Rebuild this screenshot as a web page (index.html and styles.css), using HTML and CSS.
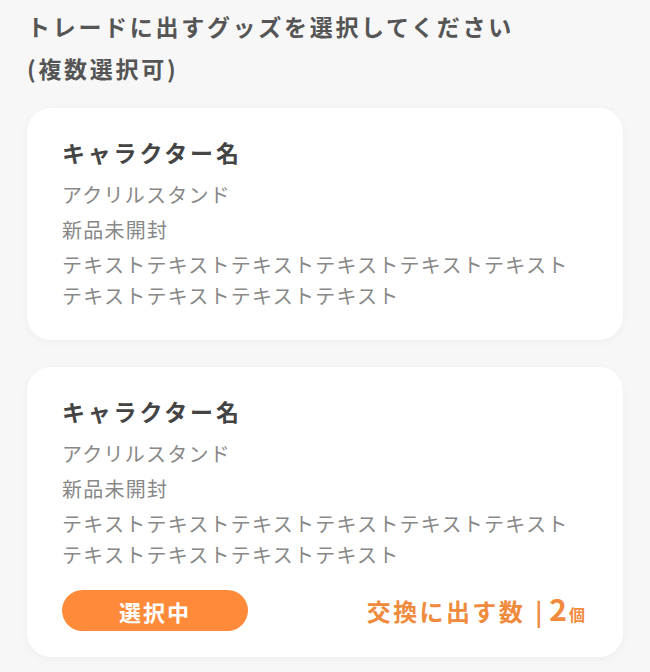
FILE: index.html
```html
<!DOCTYPE html>
<html lang="ja">
<head>
    <meta charset="UTF-8">
    <title>グッズ選択</title>
    <link rel="stylesheet" href="styles.css">
</head>
<body>
    <div class="page">
        <h1 class="pageTitle">トレードに出すグッズを選択してください<br>(複数選択可)</h1>

        <div class="goodsCard">
            <h2 class="goodsName">キャラクター名</h2>
            <p class="goodsInfo">アクリルスタンド</p>
            <p class="goodsInfo">新品未開封</p>
            <p class="goodsInfo goodsText">テキストテキストテキストテキストテキストテキスト<br>テキストテキストテキストテキスト</p>
        </div>

        <div class="goodsCard">
            <h2 class="goodsName">キャラクター名</h2>
            <p class="goodsInfo">アクリルスタンド</p>
            <p class="goodsInfo">新品未開封</p>
            <p class="goodsInfo goodsText">テキストテキストテキストテキストテキストテキスト<br>テキストテキストテキストテキスト</p>
            <div class="cardFoot">
                <button class="selectBtn">選択中</button>
                <div class="countBox">
                    <span class="countLabel">交換に出す数</span>
                    <span class="countBar">|</span>
                    <span class="countNum">2</span>
                    <span class="countUnit">個</span>
                </div>
            </div>
        </div>
    </div>
</body>
</html>
```

FILE: styles.css
```css
html, body{
    margin: 0;
    padding: 0;
    background: #f7f7f7;
}
body{
    font-family: "Noto Sans CJK JP", "Noto Sans", sans-serif;
}

.page{
    padding: 5px 27px 14px;
}

.pageTitle{
    margin: 0 0 19px;
    font-size: 23px;
    line-height: 42px;
    font-weight: bold;
    letter-spacing: 2.7px;
    color: #555;
}

.goodsCard{
    background: #fff;
    border-radius: 24px;
    box-shadow: 0 2px 10px rgba(0, 0, 0, 0.04);
    padding: 24px 35px 29px;
    margin-bottom: 27px;
}

.goodsName{
    margin: 0 0 5px;
    font-size: 23px;
    line-height: 40px;
    font-weight: bold;
    letter-spacing: 2.8px;
    color: #444;
}

.goodsInfo{
    margin: 0;
    font-size: 20px;
    line-height: 35px;
    letter-spacing: 1.25px;
    color: #888;
}
.goodsText{
    line-height: 31px;
    margin-top: 2px;
}

.goodsCard .cardFoot{
    margin-bottom: -3px;
}
.cardFoot{
    display: flex;
    align-items: center;
    justify-content: space-between;
    margin-top: 20px;
}

.selectBtn{
    width: 186px;
    height: 41px;
    border: none;
    border-radius: 21px;
    background: #ff8a3a;
    color: #fff;
    font-family: inherit;
    font-size: 22px;
    font-weight: bold;
    letter-spacing: 2px;
    padding: 0;
}

.countBox{
    display: flex;
    align-items: baseline;
    color: #f08a3c;
    font-weight: bold;
    margin-right: 3px;
}
.countLabel{
    font-size: 24px;
    letter-spacing: 2.4px;
}
.countBar{
    font-size: 24px;
    margin: 0 7px 0 10px;
}
.countNum{
    font-size: 30px;
    line-height: 1;
}
.countUnit{
    font-size: 16px;
    margin-left: 2px;
}
```
